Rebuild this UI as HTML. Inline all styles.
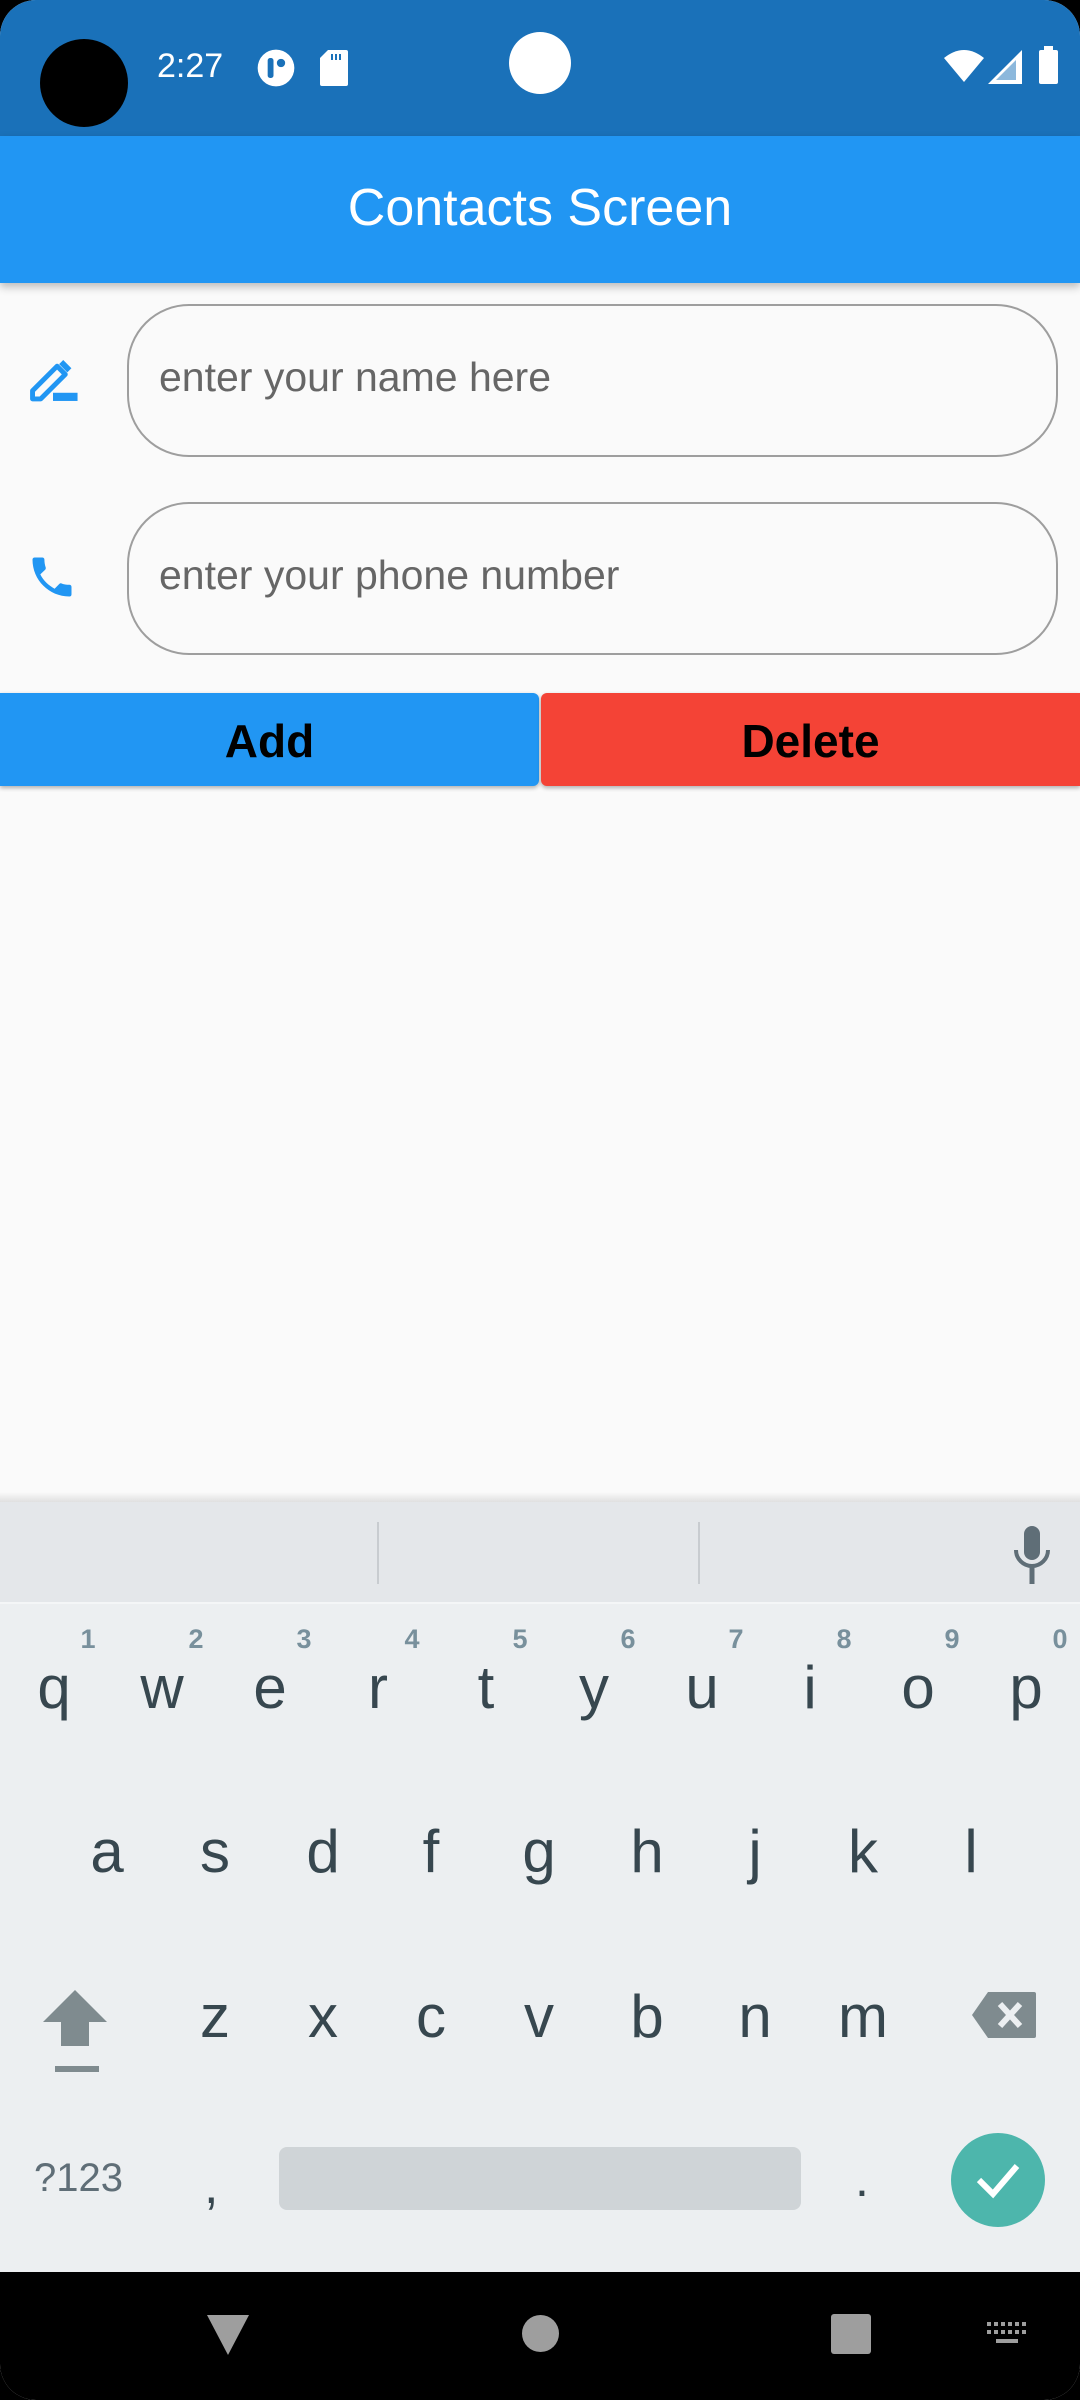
<!DOCTYPE html>
<html><head><meta charset="utf-8"><style>
*{margin:0;padding:0;box-sizing:border-box}
body{width:1080px;height:2400px;background:#000;font-family:"Liberation Sans",Roboto,sans-serif;overflow:hidden;position:relative}
.scr{position:absolute;left:0;top:0;width:1080px;height:2400px;background:#fafafa;border-radius:36px;overflow:hidden}
.a{position:absolute}
.k{position:absolute;width:108px;text-align:center;color:#37474f;font-size:60px;line-height:60px}
.n{position:absolute;width:40px;text-align:center;color:#78909c;font-size:27px;font-weight:bold}
</style></head><body><div class="scr">
<div class="a" style="left:0;top:0;width:1080px;height:136px;background:#1a71b9"></div>
<div class="a" style="left:40px;top:39px;width:88px;height:88px;border-radius:50%;background:#000"></div>
<div class="a" style="left:157px;top:47px;color:#fff;font-size:34px;font-weight:500">2:27</div>
<svg class="a" style="left:256px;top:48px" width="40" height="40" viewBox="0 0 24 24"><circle cx="12" cy="12" r="11" fill="#fff"/><rect x="7" y="6" width="3.5" height="12" rx="1.5" fill="#1a71b9"/><circle cx="15" cy="9" r="2.5" fill="#1a71b9"/></svg>
<svg class="a" style="left:320px;top:50px" width="28" height="36" viewBox="0 0 14 18"><path d="M4 0h9a1 1 0 0 1 1 1v16a1 1 0 0 1-1 1H1a1 1 0 0 1-1-1V4z" fill="#fff"/><path d="M6 2v3M8 2v3M10 2v3" stroke="#1a71b9" stroke-width="1"/></svg>
<div class="a" style="left:509px;top:32px;width:62px;height:62px;border-radius:50%;background:#fff"></div>
<svg class="a" style="left:944px;top:50px" width="40" height="32" viewBox="0 0 20 16"><path d="M0 4Q10-4 20 4L10 16z" fill="#fff"/></svg>
<svg class="a" style="left:988px;top:50px" width="34" height="34" viewBox="0 0 17 17"><path d="M17 0V17H0z" fill="#fff"/><path d="M14 5V15H4z" fill="#1a71b9" opacity=".5"/></svg>
<div class="a" style="left:1039px;top:50px;width:19px;height:34px;background:#fff;border-radius:2px"></div>
<div class="a" style="left:1044px;top:46px;width:9px;height:5px;background:#fff"></div>
<div class="a" style="left:0;top:136px;width:1080px;height:147px;background:#2196f3;box-shadow:0 4px 8px rgba(0,0,0,.25)"></div>
<div class="a" style="left:0;top:178px;width:1080px;text-align:center;color:#fff;font-size:52px">Contacts Screen</div>
<svg class="a" style="left:28px;top:358px" width="50" height="45" viewBox="0 0 24 22"><path d="M2 20V16L14 4l4 4L6 20z" fill="none" stroke="#2196f3" stroke-width="2.4" stroke-linejoin="round"/><path d="M15 3l2-2 4 4-2 2z" fill="#2196f3"/><rect x="12" y="17" width="12" height="4" fill="#2196f3"/></svg>
<div class="a" style="left:127px;top:304px;width:931px;height:153px;border:2px solid #9e9e9e;border-radius:62px"></div>
<div class="a" style="left:159px;top:354px;color:#666;font-size:41px">enter your name here</div>
<svg class="a" style="left:26px;top:550px" width="52" height="54" viewBox="0 0 24 24"><path d="M6.6 10.8c1.4 2.8 3.8 5.1 6.6 6.6l2.2-2.2c.3-.3.7-.4 1-.2 1.1.4 2.3.6 3.6.6.6 0 1 .4 1 1V20c0 .6-.4 1-1 1C10.6 21 3 13.4 3 4c0-.6.4-1 1-1h3.5c.6 0 1 .4 1 1 0 1.3.2 2.5.6 3.6.1.3 0 .7-.2 1z" fill="#2196f3"/></svg>
<div class="a" style="left:127px;top:502px;width:931px;height:153px;border:2px solid #9e9e9e;border-radius:62px"></div>
<div class="a" style="left:159px;top:552px;color:#666;font-size:41px">enter your phone number</div>
<div class="a" style="left:0;top:693px;width:539px;height:93px;background:#2196f3;border-radius:0 6px 6px 0;box-shadow:0 2px 4px rgba(0,0,0,.3)"></div>
<div class="a" style="left:541px;top:693px;width:539px;height:93px;background:#f44336;border-radius:6px 0 0 6px;box-shadow:0 2px 4px rgba(0,0,0,.3)"></div>
<div class="a" style="left:0;top:714px;width:539px;text-align:center;font-size:46px;font-weight:bold;color:#000">Add</div>
<div class="a" style="left:541px;top:714px;width:539px;text-align:center;font-size:46px;font-weight:bold;color:#000">Delete</div>
<div class="a" style="left:0;top:1492px;width:1080px;height:10px;background:linear-gradient(#fafafa,#e0e0e0)"></div>
<div class="a" style="left:0;top:1502px;width:1080px;height:100px;background:#e4e7ea"></div>
<div class="a" style="left:377px;top:1522px;width:2px;height:62px;background:#c8ccd0"></div>
<div class="a" style="left:698px;top:1522px;width:2px;height:62px;background:#c8ccd0"></div>
<svg class="a" style="left:1012px;top:1526px" width="40" height="58" viewBox="0 0 20 29"><rect x="6" y="0" width="8" height="17" rx="4" fill="#5f6e77"/><path d="M2 12a8 8 0 0 0 16 0" fill="none" stroke="#5f6e77" stroke-width="2"/><path d="M10 20v9" stroke="#5f6e77" stroke-width="2.5"/></svg>
<div class="a" style="left:0;top:1602px;width:1080px;height:2px;background:#f4f6f7"></div>
<div class="a" style="left:0;top:1604px;width:1080px;height:668px;background:#eceff1"></div>
<div class="n" style="left:68px;top:1624px">1</div><div class="n" style="left:176px;top:1624px">2</div><div class="n" style="left:284px;top:1624px">3</div><div class="n" style="left:392px;top:1624px">4</div><div class="n" style="left:500px;top:1624px">5</div><div class="n" style="left:608px;top:1624px">6</div><div class="n" style="left:716px;top:1624px">7</div><div class="n" style="left:824px;top:1624px">8</div><div class="n" style="left:932px;top:1624px">9</div><div class="n" style="left:1040px;top:1624px">0</div>
<div class="k" style="left:0;top:1658px">q</div><div class="k" style="left:108px;top:1658px">w</div><div class="k" style="left:216px;top:1658px">e</div><div class="k" style="left:324px;top:1658px">r</div><div class="k" style="left:432px;top:1658px">t</div><div class="k" style="left:540px;top:1658px">y</div><div class="k" style="left:648px;top:1658px">u</div><div class="k" style="left:756px;top:1658px">i</div><div class="k" style="left:864px;top:1658px">o</div><div class="k" style="left:972px;top:1658px">p</div>
<div class="k" style="left:53px;top:1822px">a</div><div class="k" style="left:161px;top:1822px">s</div><div class="k" style="left:269px;top:1822px">d</div><div class="k" style="left:377px;top:1822px">f</div><div class="k" style="left:485px;top:1822px">g</div><div class="k" style="left:593px;top:1822px">h</div><div class="k" style="left:701px;top:1822px">j</div><div class="k" style="left:809px;top:1822px">k</div><div class="k" style="left:917px;top:1822px">l</div>
<svg class="a" style="left:43px;top:1990px" width="64" height="84" viewBox="0 0 32 42"><path d="M16 0L32 16H23V28H9V16H0z" fill="#7f8b8f"/><rect x="6" y="38" width="22" height="3" fill="#7f8b8f"/></svg>
<div class="k" style="left:161px;top:1987px">z</div><div class="k" style="left:269px;top:1987px">x</div><div class="k" style="left:377px;top:1987px">c</div><div class="k" style="left:485px;top:1987px">v</div><div class="k" style="left:593px;top:1987px">b</div><div class="k" style="left:701px;top:1987px">n</div><div class="k" style="left:809px;top:1987px">m</div>
<svg class="a" style="left:972px;top:1992px" width="64" height="46" viewBox="0 0 32 23"><path d="M8 0H31a1 1 0 0 1 1 1V22a1 1 0 0 1-1 1H8L0 11.5z" fill="#7f8b8f"/><path d="M14 6l10 11M24 6L14 17" stroke="#eceff1" stroke-width="3"/></svg>
<div class="a" style="left:34px;top:2156px;color:#5f6e77;font-size:40px">?123</div>
<div class="a" style="left:204px;top:2156px;color:#37474f;font-size:52px">,</div>
<div class="a" style="left:279px;top:2147px;width:522px;height:63px;background:#cfd4d7;border-radius:8px"></div>
<div class="a" style="left:855px;top:2150px;color:#37474f;font-size:50px">.</div>
<div class="a" style="left:951px;top:2133px;width:94px;height:94px;border-radius:50%;background:#4db6ac"></div>
<svg class="a" style="left:975px;top:2158px" width="46" height="44" viewBox="0 0 23 22"><path d="M2 11l7 7L21 4" fill="none" stroke="#fff" stroke-width="3"/></svg>
<div class="a" style="left:0;top:2272px;width:1080px;height:128px;background:#000"></div>
<svg class="a" style="left:207px;top:2315px" width="42" height="40" viewBox="0 0 42 40"><path d="M0 0H42L21 40z" fill="#9e9e9e"/></svg>
<div class="a" style="left:522px;top:2315px;width:37px;height:37px;border-radius:50%;background:#9e9e9e"></div>
<div class="a" style="left:831px;top:2314px;width:40px;height:40px;border-radius:3px;background:#9e9e9e"></div>
<svg class="a" style="left:987px;top:2322px" width="40" height="26" viewBox="0 0 40 26"><g fill="#9e9e9e"><rect x="0" y="0" width="4" height="4"/><rect x="7" y="0" width="4" height="4"/><rect x="14" y="0" width="4" height="4"/><rect x="21" y="0" width="4" height="4"/><rect x="28" y="0" width="4" height="4"/><rect x="35" y="0" width="4" height="4"/><rect x="0" y="8" width="4" height="4"/><rect x="7" y="8" width="4" height="4"/><rect x="14" y="8" width="4" height="4"/><rect x="21" y="8" width="4" height="4"/><rect x="28" y="8" width="4" height="4"/><rect x="35" y="8" width="4" height="4"/><rect x="9" y="17" width="22" height="4"/></g></svg>
</div></body></html>
